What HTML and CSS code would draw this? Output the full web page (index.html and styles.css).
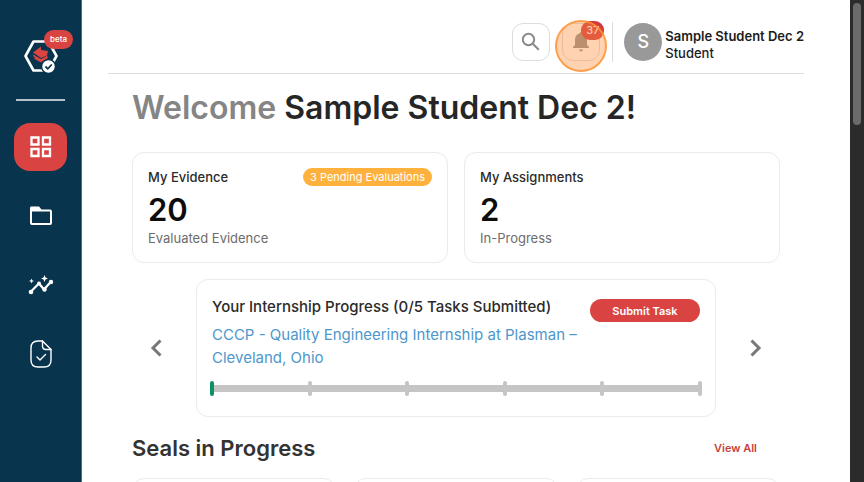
FILE: index.html
```html
<!DOCTYPE html>
<html lang="en">
<head>
	<meta charset="utf-8">
	<meta name="viewport" content="width=device-width, initial-scale=1">
	<title>Student Dashboard</title>
	<link rel="stylesheet" href="styles.css">
</head>
<body>
	<div class="app">
		<aside class="sidebar">
			<a class="logo" href="#" aria-label="Home">
				<svg width="36" height="36" viewBox="0 0 36 36">
					<path d="M10.500 3.500h15l8 14.500-8 14.500h-15L2.500 18z" fill="none" stroke="#fff" stroke-width="2.600" stroke-linejoin="round"/>
					<path d="M10 14.500l8-6v3.500l7 1-1 4.500-6 2.500z" fill="#d94442"/>
					<path d="M10 16.500l8 4.500 6.500-3.500v3l-6.500 4-6.500-3.500v-2l-1.500-1z" fill="#d94442"/>
					<circle cx="25.500" cy="28.500" r="7" fill="#fff" stroke="#08344e" stroke-width="1.500"/>
					<path d="M22.500 28.500l2.300 2.300 4-4.300" fill="none" stroke="#08344e" stroke-width="1.800"/>
				</svg>
				<span class="beta">beta</span>
			</a>
			<nav class="nav">
				<a class="nav-item active" href="#" aria-label="Dashboard">
					<svg width="22" height="22" viewBox="0 0 22 22" fill="none" stroke="#fff" stroke-width="2.300">
						<path d="M1.500 1.500h7v7h-7zM13 1.500h7v7h-7zM1.500 13h7v7h-7zM13 13h7v7h-7z"/>
					</svg>
				</a>
				<a class="nav-item" href="#" aria-label="Folders">
					<svg width="26" height="24" viewBox="0 0 26 24">
						<path d="M3 2.500h8l2.500 3H22q2 0 2 2V19q0 2-2 2H4q-2 0-2-2V4.500q0-2 1-2zM4 7.500v11.500h18V7.500z" fill="#fff" fill-rule="evenodd"/>
					</svg>
				</a>
				<a class="nav-item" href="#" aria-label="Insights">
					<svg width="26" height="22" viewBox="0 0 26 22" fill="#fff">
						<path d="M3 17.500l8-8 5 6 7.500-8.500" fill="none" stroke="#fff" stroke-width="2.200"/>
						<circle cx="3" cy="18" r="2.300"/>
						<circle cx="11" cy="9.500" r="2"/>
						<circle cx="16.500" cy="15.500" r="2.200"/>
						<circle cx="23" cy="8" r="2.200"/>
						<path d="M16.500 1l1 2.500 2.500 1-2.500 1-1 2.500-1-2.500-2.500-1 2.500-1zM3.500 4.500l.7 1.800 1.800.7-1.800.7-.7 1.800-.7-1.800L1 7l1.800-.7z"/>
					</svg>
				</a>
				<a class="nav-item" href="#" aria-label="Reports">
					<svg width="24" height="28" viewBox="0 0 24 28" fill="none" stroke="#fff" stroke-width="1.400" stroke-linecap="round" stroke-linejoin="round">
						<path d="M13.500 1H9Q2 1 2 8v12q0 7 7 7h6q7 0 7-7V9.500z"/>
						<path d="M13.500 1v5q0 3.500 3.500 3.500h5"/>
						<path d="M8 17l3 3 5.500-5.500"/>
					</svg>
				</a>
			</nav>
		</aside>

		<main class="main">
			<header class="topbar">
				<button class="icon-btn" type="button" aria-label="Search">
					<svg width="20" height="20" viewBox="0 0 20 20" fill="none" stroke="#8a8a8a" stroke-width="2">
						<circle cx="7.500" cy="7.500" r="5.700"/>
						<path d="M11.800 11.800l6 6"/>
					</svg>
				</button>
				<button class="icon-btn bell" type="button" aria-label="Notifications">
					<svg width="18" height="20" viewBox="0 0 18 20" fill="#8f8f8f">
						<path d="M9 0q1.500 0 1.500 1.600Q15 2.800 15 8v5l2 2v1H1v-1l2-2V8q0-5.200 4.500-6.400Q7.500 0 9 0zM7 17.500h4q-.3 2-2 2t-2-2z"/>
					</svg>
					<span class="count">37</span>
					<span class="halo"></span>
				</button>
				<div class="user">
					<span class="avatar">S</span>
					<div>
						<div class="user-name">Sample Student Dec 2</div>
						<div class="user-role">Student</div>
					</div>
				</div>
			</header>

			<div class="content">
				<h1 class="welcome"><span>Welcome</span> Sample Student Dec 2!</h1>

				<section class="stats">
					<div class="card">
						<div class="card-head">
							<h2>My Evidence</h2>
							<span class="pill">3 Pending Evaluations</span>
						</div>
						<div class="number">20</div>
						<p class="caption">Evaluated Evidence</p>
					</div>
					<div class="card">
						<div class="card-head">
							<h2>My Assignments</h2>
						</div>
						<div class="number">2</div>
						<p class="caption">In-Progress</p>
					</div>
				</section>

				<section class="carousel">
					<button class="arrow" type="button" aria-label="Previous">
						<svg width="12" height="18" viewBox="0 0 12 18" fill="none" stroke="#777" stroke-width="3"><path d="M10.500 1.500L3 9l7.500 7.500"/></svg>
					</button>
					<div class="card progress-card">
						<div class="progress-head">
							<div>
								<h2>Your Internship Progress (0/5 Tasks Submitted)</h2>
								<a class="internship" href="#">CCCP - Quality Engineering Internship at Plasman – Cleveland, Ohio</a>
							</div>
							<button class="submit" type="button">Submit Task</button>
						</div>
						<div class="track">
							<i class="done"></i><i></i><i></i><i></i><i></i><i></i>
						</div>
					</div>
					<button class="arrow" type="button" aria-label="Next">
						<svg width="12" height="18" viewBox="0 0 12 18" fill="none" stroke="#777" stroke-width="3"><path d="M1.500 1.500L9 9l-7.500 7.500"/></svg>
					</button>
				</section>

				<div class="section-head">
					<h2>Seals in Progress</h2>
					<a href="#">View All</a>
				</div>
				<section class="seals">
					<div class="card"></div>
					<div class="card"></div>
					<div class="card"></div>
				</section>
			</div>
		</main>

		<div class="scrollbar"><div class="thumb"></div></div>
	</div>
</body>
</html>
```
FILE: styles.css
```css
* { box-sizing: border-box; }
body { margin: 0; font-family: Inter, "Liberation Sans", sans-serif; color: #2b2b2b; background: #fff; }
h1, h2, p { margin: 0; }
a { text-decoration: none; }
button { font-family: inherit; padding: 0; cursor: pointer; }
svg { display: block; flex: none; }
.app { display: flex; height: 100vh; overflow: hidden; }

/* sidebar */
.sidebar { flex: none; width: 82px; padding: 38px 14px 0; background: #08344e; border-right: 1px solid #4a6b7e; }
.logo { position: relative; display: flex; justify-content: center; height: 63px; margin: 0 2px; border-bottom: 2px solid #b5c2ca; }
.beta { position: absolute; top: -8px; right: -8px; padding: 0 6px; border-radius: 10px; background: #d94442; color: #fff; font-size: 8px; font-weight: 500; line-height: 19px; }
.nav { display: flex; flex-direction: column; gap: 21px; margin-top: 22px; }
.nav-item { display: flex; align-items: center; justify-content: center; height: 48px; border-radius: 16px; }
.nav-item.active { background: #d94442; }

/* top bar */
.main { flex: 1; min-width: 0; }
.topbar { display: flex; justify-content: flex-end; align-items: center; height: 74px; margin: 0 46px 0 26px; padding-top: 11px; border-bottom: 1px solid #dcdcdc; }
.icon-btn { position: relative; display: flex; align-items: center; justify-content: center; width: 38px; height: 38px; margin-right: 12px; border: 1px solid #ddd; border-radius: 11px; background: #fff; }
.count { position: absolute; top: -3px; right: -5px; width: 23px; border-radius: 9px; background: #d33a40; color: #fff; font-size: 11px; line-height: 19px; }
.halo { position: absolute; top: -4px; left: -8px; width: 52px; height: 52px; border: 2px solid rgba(255, 145, 50, .8); border-radius: 50%; background: rgba(255, 145, 60, .4); }
.user { display: flex; align-items: center; gap: 3px; padding-left: 11px; border-left: 1px solid #ddd; font-size: 13px; line-height: 17px; color: #1c1c1c; }
.avatar { width: 38px; border-radius: 50%; background: #999; color: #fff; font-size: 18px; font-weight: 500; line-height: 38px; text-align: center; }
.user-name { margin-top: 6px; font-weight: 600; }
.user-role { font-weight: 500; }

/* content */
.content { padding: 13px 70px 0 50px; }
.welcome { font-size: 32px; font-weight: 600; line-height: 42px; color: #262626; white-space: nowrap; }
.welcome span { color: #858585; }
.card { border: 1px solid #ebebeb; border-radius: 12px; background: #fff; }
.stats { display: grid; grid-template-columns: 1fr 1fr; gap: 16px; margin-top: 23px; }
.stats .card { padding: 15px; }
.card-head { display: flex; align-items: center; justify-content: space-between; height: 18px; }
.card-head h2 { font-size: 13px; font-weight: 500; }
.pill { padding: 0 7px; border-radius: 9px; background: #ffb13d; color: #fff; font-size: 11px; line-height: 18px; }
.number { margin-top: 4px; font-size: 31px; font-weight: 600; line-height: 39px; color: #0d0d0d; }
.caption { font-size: 13px; line-height: 18px; color: #6c6c6c; }

.carousel { display: flex; align-items: center; justify-content: space-between; margin-top: 16px; padding: 0 18px; }
.arrow { border: 0; background: none; }
.progress-card { flex: 1; margin: 0 34px; padding: 15px; }
.progress-head { display: flex; align-items: flex-start; justify-content: space-between; }
.progress-head h2 { font-size: 15px; font-weight: 500; line-height: 24px; white-space: nowrap; }
.internship { display: block; margin-top: 4px; color: #4e97cb; font-size: 15px; line-height: 23px; }
.submit { flex: none; width: 110px; height: 23px; margin-top: 4px; border: 0; border-radius: 12px; background: #d94442; color: #fff; font-size: 11px; font-weight: 600; }
.track { display: flex; justify-content: space-between; align-items: center; height: 7px; margin: 16px -2px 9px; background: #c5c5c5; }
.track i { width: 4px; height: 15px; border-radius: 2px; background: #c5c5c5; }
.track .done { background: #0d9166; }

.section-head { display: flex; align-items: center; justify-content: space-between; margin-top: 16px; padding-right: 23px; }
.section-head h2 { font-size: 22px; font-weight: 600; line-height: 30px; color: #333; }
.section-head a { color: #c93f3d; font-size: 11px; font-weight: 600; }
.seals { display: grid; grid-template-columns: repeat(3, 1fr); gap: 18px; margin-top: 15px; }
.seals .card { height: 160px; }

/* scroll bar */
.scrollbar { flex: none; width: 14px; padding: 3px; background: #2b2b2b; }
.thumb { height: 122px; border-radius: 4px; background: #6b6b6b; }
```
